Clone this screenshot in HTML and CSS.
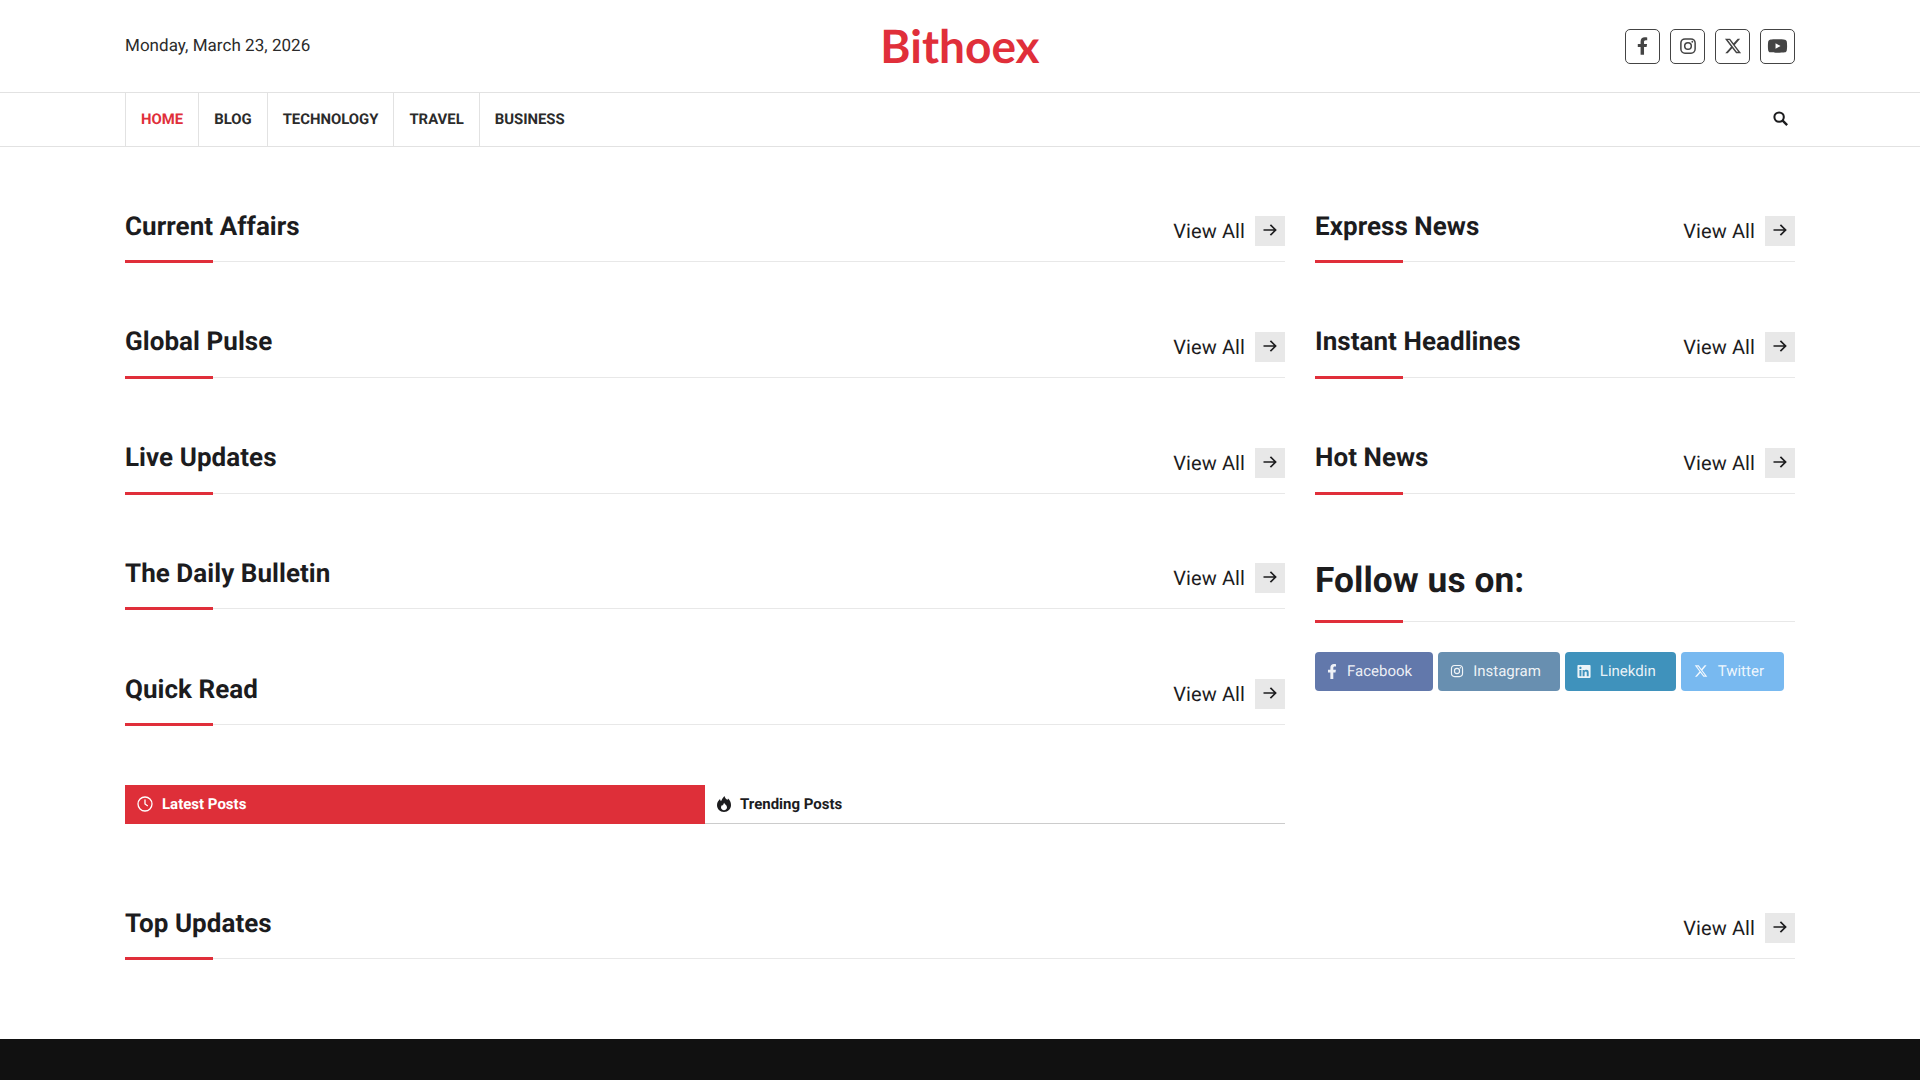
FILE: index.html
```html
<!DOCTYPE html>
<html lang="en">
<head>
<meta charset="utf-8">
<title>Bithoex</title>
<link rel="stylesheet" href="styles.css">
</head>
<body>
<svg class="defs" width="0" height="0" aria-hidden="true">
  <symbol id="i-fb" viewBox="0 0 320 512"><path fill="currentColor" d="M279.14 288l14.22-92.66h-88.91v-60.13c0-25.35 12.42-50.06 52.24-50.06h40.42V6.26S260.43 0 225.36 0c-73.22 0-121.08 44.38-121.08 124.72v70.62H22.89V288h81.39v224h100.17V288z"/></symbol>
  <symbol id="i-ig" viewBox="0 0 24 24"><g fill="none" stroke="currentColor" stroke-width="2"><rect x="2.5" y="2.5" width="19" height="19" rx="5.5"/><circle cx="12" cy="12" r="4.4"/></g><circle cx="17.7" cy="6.3" r="1.2" fill="currentColor"/></symbol>
  <symbol id="i-x" viewBox="0 0 512 512"><path fill="currentColor" d="M389.2 48h70.6L305.6 224.2 487 464H345L233.7 318.6 106.5 464H35.8L200.7 275.5 26.8 48H172.4L272.9 180.9 389.2 48zM364.4 421.8h39.1L151.1 88h-42L364.4 421.8z"/></symbol>
  <symbol id="i-yt" viewBox="0 0 576 512"><path fill="currentColor" d="M549.655 124.083c-6.281-23.65-24.787-42.276-48.284-48.597C458.781 64 288 64 288 64S117.22 64 74.629 75.486c-23.497 6.322-42.003 24.947-48.284 48.597-11.412 42.867-11.412 132.305-11.412 132.305s0 89.438 11.412 132.305c6.281 23.65 24.787 41.5 48.284 47.821C117.22 448 288 448 288 448s170.78 0 213.371-11.486c23.497-6.321 42.003-24.171 48.284-47.821 11.412-42.867 11.412-132.305 11.412-132.305s0-89.438-11.412-132.305zm-317.51 213.508V175.185l142.739 81.205-142.739 81.201z"/></symbol>
  <symbol id="i-in" viewBox="0 0 448 512"><path fill="currentColor" d="M416 32H31.9C14.3 32 0 46.5 0 64.3v383.4C0 465.5 14.3 480 31.9 480H416c17.6 0 32-14.5 32-32.3V64.3c0-17.8-14.4-32.3-32-32.3zM135.4 416H69V202.2h66.5V416zm-33.2-243c-21.3 0-38.5-17.3-38.5-38.5S80.9 96 102.2 96c21.2 0 38.5 17.3 38.5 38.5 0 21.3-17.2 38.5-38.5 38.5zm282.1 243h-66.4V312c0-24.8-.5-56.7-34.5-56.7-34.6 0-39.9 27-39.9 54.9V416h-66.4V202.2h63.7v29.2h.9c8.9-16.8 30.6-34.5 62.9-34.5 67.2 0 79.7 44.3 79.7 101.9V416z"/></symbol>
  <symbol id="i-arrow" viewBox="0 0 14 14"><path fill="none" stroke="currentColor" stroke-width="1.7" d="M.5 7h12M7.4 1.800l5.200 5.200-5.200 5.200"/></symbol>
  <symbol id="i-search" viewBox="0 0 14 14"><circle cx="5.7" cy="5.7" r="4.4" fill="none" stroke="currentColor" stroke-width="1.900"/><path d="M9 9l4.200 4.200" stroke="currentColor" stroke-width="2.200" fill="none"/></symbol>
  <symbol id="i-clock" viewBox="0 0 16 16"><circle cx="8" cy="8" r="7" fill="none" stroke="currentColor" stroke-width="1.300"/><path d="M8 3.600V8l2.800 2" fill="none" stroke="currentColor" stroke-width="1.300"/></symbol>
  <symbol id="i-fire" viewBox="0 0 14 16"><path fill="currentColor" d="M7.400 0c.4 2 2 3 3 4 .2-.6.4-1 .6-1.400C12.800 4.200 14 6.200 14 9c0 4-3 7-7 7s-7-3-7-7c0-2.800 1.600-4.600 3-6 .2 1 .5 1.600 1 2.200C4.800 3.200 6 1.500 7.400 0z"/><path fill="#fff" d="M7.100 6.800c.3 1.200 2.900 2.300 2.900 4.500 0 1.700-1.300 2.900-3 2.900s-3-1.200-3-2.900c0-1 .5-1.800 1.200-2.500.2.500.4.800.7 1 .2-1.100.6-2.100 1.200-3z"/></symbol>
</svg>

<header class="topbar">
  <div class="wrap topbar-row">
    <div class="date">Monday, March 23, 2026</div>
    <a class="logo">Bithoex</a>
    <div class="social">
      <a class="social-btn"><svg class="ic-fb"><use href="#i-fb"/></svg></a>
      <a class="social-btn"><svg class="ic-ig"><use href="#i-ig"/></svg></a>
      <a class="social-btn"><svg class="ic-x"><use href="#i-x"/></svg></a>
      <a class="social-btn"><svg class="ic-yt"><use href="#i-yt"/></svg></a>
    </div>
  </div>
</header>

<nav class="navbar">
  <div class="wrap nav-row">
    <ul class="menu">
      <li class="menu-item active">HOME</li>
      <li class="menu-item">BLOG</li>
      <li class="menu-item">TECHNOLOGY</li>
      <li class="menu-item">TRAVEL</li>
      <li class="menu-item">BUSINESS</li>
    </ul>
    <svg class="ic-search"><use href="#i-search"/></svg>
  </div>
</nav>

<main class="wrap content">
  <div class="columns">
    <section class="col-main">
      <div class="block"><div class="head"><h2 class="title">Current Affairs</h2><a class="view">View All<span class="arrow"><svg><use href="#i-arrow"/></svg></span></a></div></div>
      <div class="block"><div class="head"><h2 class="title">Global Pulse</h2><a class="view">View All<span class="arrow"><svg><use href="#i-arrow"/></svg></span></a></div></div>
      <div class="block"><div class="head"><h2 class="title">Live Updates</h2><a class="view">View All<span class="arrow"><svg><use href="#i-arrow"/></svg></span></a></div></div>
      <div class="block"><div class="head"><h2 class="title">The Daily Bulletin</h2><a class="view">View All<span class="arrow"><svg><use href="#i-arrow"/></svg></span></a></div></div>
      <div class="block"><div class="head"><h2 class="title">Quick Read</h2><a class="view">View All<span class="arrow"><svg><use href="#i-arrow"/></svg></span></a></div></div>
      <div class="tabs">
        <div class="tab tab-active"><svg class="ic-clock"><use href="#i-clock"/></svg>Latest Posts</div>
        <div class="tab"><svg class="ic-fire"><use href="#i-fire"/></svg>Trending Posts</div>
      </div>
    </section>
    <aside class="col-side">
      <div class="block"><div class="head"><h2 class="title">Express News</h2><a class="view">View All<span class="arrow"><svg><use href="#i-arrow"/></svg></span></a></div></div>
      <div class="block"><div class="head"><h2 class="title">Instant Headlines</h2><a class="view">View All<span class="arrow"><svg><use href="#i-arrow"/></svg></span></a></div></div>
      <div class="block"><div class="head"><h2 class="title">Hot News</h2><a class="view">View All<span class="arrow"><svg><use href="#i-arrow"/></svg></span></a></div></div>
      <div class="follow">
        <div class="head head-lg"><h2 class="title title-lg">Follow us on:</h2></div>
        <div class="follow-row">
          <a class="fbtn fb"><svg class="fi-fb"><use href="#i-fb"/></svg>Facebook</a>
          <a class="fbtn ig"><svg class="fi-ig"><use href="#i-ig"/></svg>Instagram</a>
          <a class="fbtn li"><svg class="fi-in"><use href="#i-in"/></svg>Linekdin</a>
          <a class="fbtn tw"><svg class="fi-x"><use href="#i-x"/></svg>Twitter</a>
        </div>
      </div>
    </aside>
  </div>
  <div class="block block-full"><div class="head"><h2 class="title">Top Updates</h2><a class="view">View All<span class="arrow"><svg><use href="#i-arrow"/></svg></span></a></div></div>
</main>

<footer class="footer"></footer>
</body>
</html>
```
FILE: styles.css
```css
* { box-sizing: border-box; }
html, body { margin: 0; padding: 0; }
body { background: #fff; color: #1c1c1e; font-family: Roboto, "Liberation Sans", sans-serif; overflow-x: hidden; text-rendering: geometricPrecision; }
.defs { position: absolute; }
.wrap { width: 1670px; margin: 0 auto; }

.topbar { height: 92px; }
.topbar-row { height: 92px; display: grid; grid-template-columns: 1fr auto 1fr; align-items: center; }
.date { font-size: 17px; color: #2b2b2b; letter-spacing: .04px; }
.logo { font-family: Lato, sans-serif; font-weight: 700; font-size: 46px; line-height: 1; color: #e02f3a; }
.social { display: flex; justify-content: flex-end; gap: 10px; }
.social-btn { width: 35px; height: 35px; border: 1px solid #444; border-radius: 5px; display: flex; align-items: center; justify-content: center; color: #444; }
.ic-fb { width: 11px; height: 18px; }
.ic-ig { width: 18px; height: 18px; }
.ic-x { width: 18px; height: 18px; }
.ic-yt { width: 21px; height: 18px; }

.navbar { border-top: 1px solid #e2e2e2; border-bottom: 1px solid #e2e2e2; height: 55px; }
.nav-row { height: 53px; display: flex; align-items: center; justify-content: space-between; }
.menu { list-style: none; margin: 0; padding: 0; display: flex; height: 100%; border-left: 1px solid #e2e2e2; }
.menu-item { display: flex; align-items: center; padding: 0 15px 2px; font-size: 14.880px; font-weight: 700; color: #2b2b2b; border-right: 1px solid #e2e2e2; }
.menu-item:last-child { border-right: 0; }
.menu-item.active { color: #e02f3a; }
.ic-search { width: 15px; height: 15px; color: #1c1c1e; margin: 0 7px 2px 0; }

.content { padding-top: 59px; }
.columns { display: grid; grid-template-columns: 1160px 480px; gap: 30px; }

.block { margin-bottom: 59.75px; }
.head { position: relative; display: flex; justify-content: space-between; align-items: flex-start; height: 56px; border-bottom: 1px solid #e8e8e8; }
.head::after { content: ""; position: absolute; left: 0; bottom: -2px; width: 88px; height: 3px; background: #e02f3a; }
.title { margin: 4.500px 0 0; font-size: 26px; line-height: 32px; font-weight: 700; letter-spacing: .05px; color: #1c1c1e; }
.head-lg { height: 69px; }
.title-lg { margin-top: 6px; font-size: 35.300px; line-height: 42px; }
.view { display: flex; align-items: center; gap: 10px; font-size: 20px; letter-spacing: .1px; color: #1c1c1e; margin-top: 10px; }
.arrow { width: 30px; height: 30px; padding-bottom: 2px; background: #e8e8e8; display: flex; align-items: center; justify-content: center; }
.arrow svg { width: 14px; height: 14px; }

.follow-row { display: flex; gap: 5px; margin-top: 30px; }
.fbtn { height: 39px; border-radius: 4px; color: rgba(255,255,255,.9); font-size: 15px; display: flex; align-items: center; padding: 0 20px 1px 12px; }
.fbtn svg { flex: none; }
.fb { background: #6278ab; padding-right: 20.500px; }
.ig { background: #688fb0; padding-right: 19px; }
.li { background: #3f92bc; }
.tw { background: #78b9f0; padding-left: 13px; padding-right: 20.500px; }
.fi-fb { width: 10px; height: 15px; margin-right: 10px; }
.fi-ig { width: 14px; height: 14px; margin-right: 9.500px; }
.fi-in { width: 14px; height: 15px; margin-right: 9px; }
.fi-x { width: 14px; height: 14px; margin-right: 10px; }

.tabs { display: grid; grid-template-columns: 1fr 1fr; height: 39px; }
.tab { display: flex; align-items: center; padding-left: 12px; font-size: 15px; font-weight: 700; border-bottom: 1px solid #ccc; color: #1c1c1e; }
.tab-active { background: #de2f39; color: #fff; border-bottom: 0; }
.ic-clock { width: 16px; height: 16px; margin-right: 9px; }
.ic-fire { width: 14px; height: 16px; margin-right: 9px; }

.block-full { margin-top: 79.250px; margin-bottom: 80px; }

.footer { height: 41px; background: #111; }
```
